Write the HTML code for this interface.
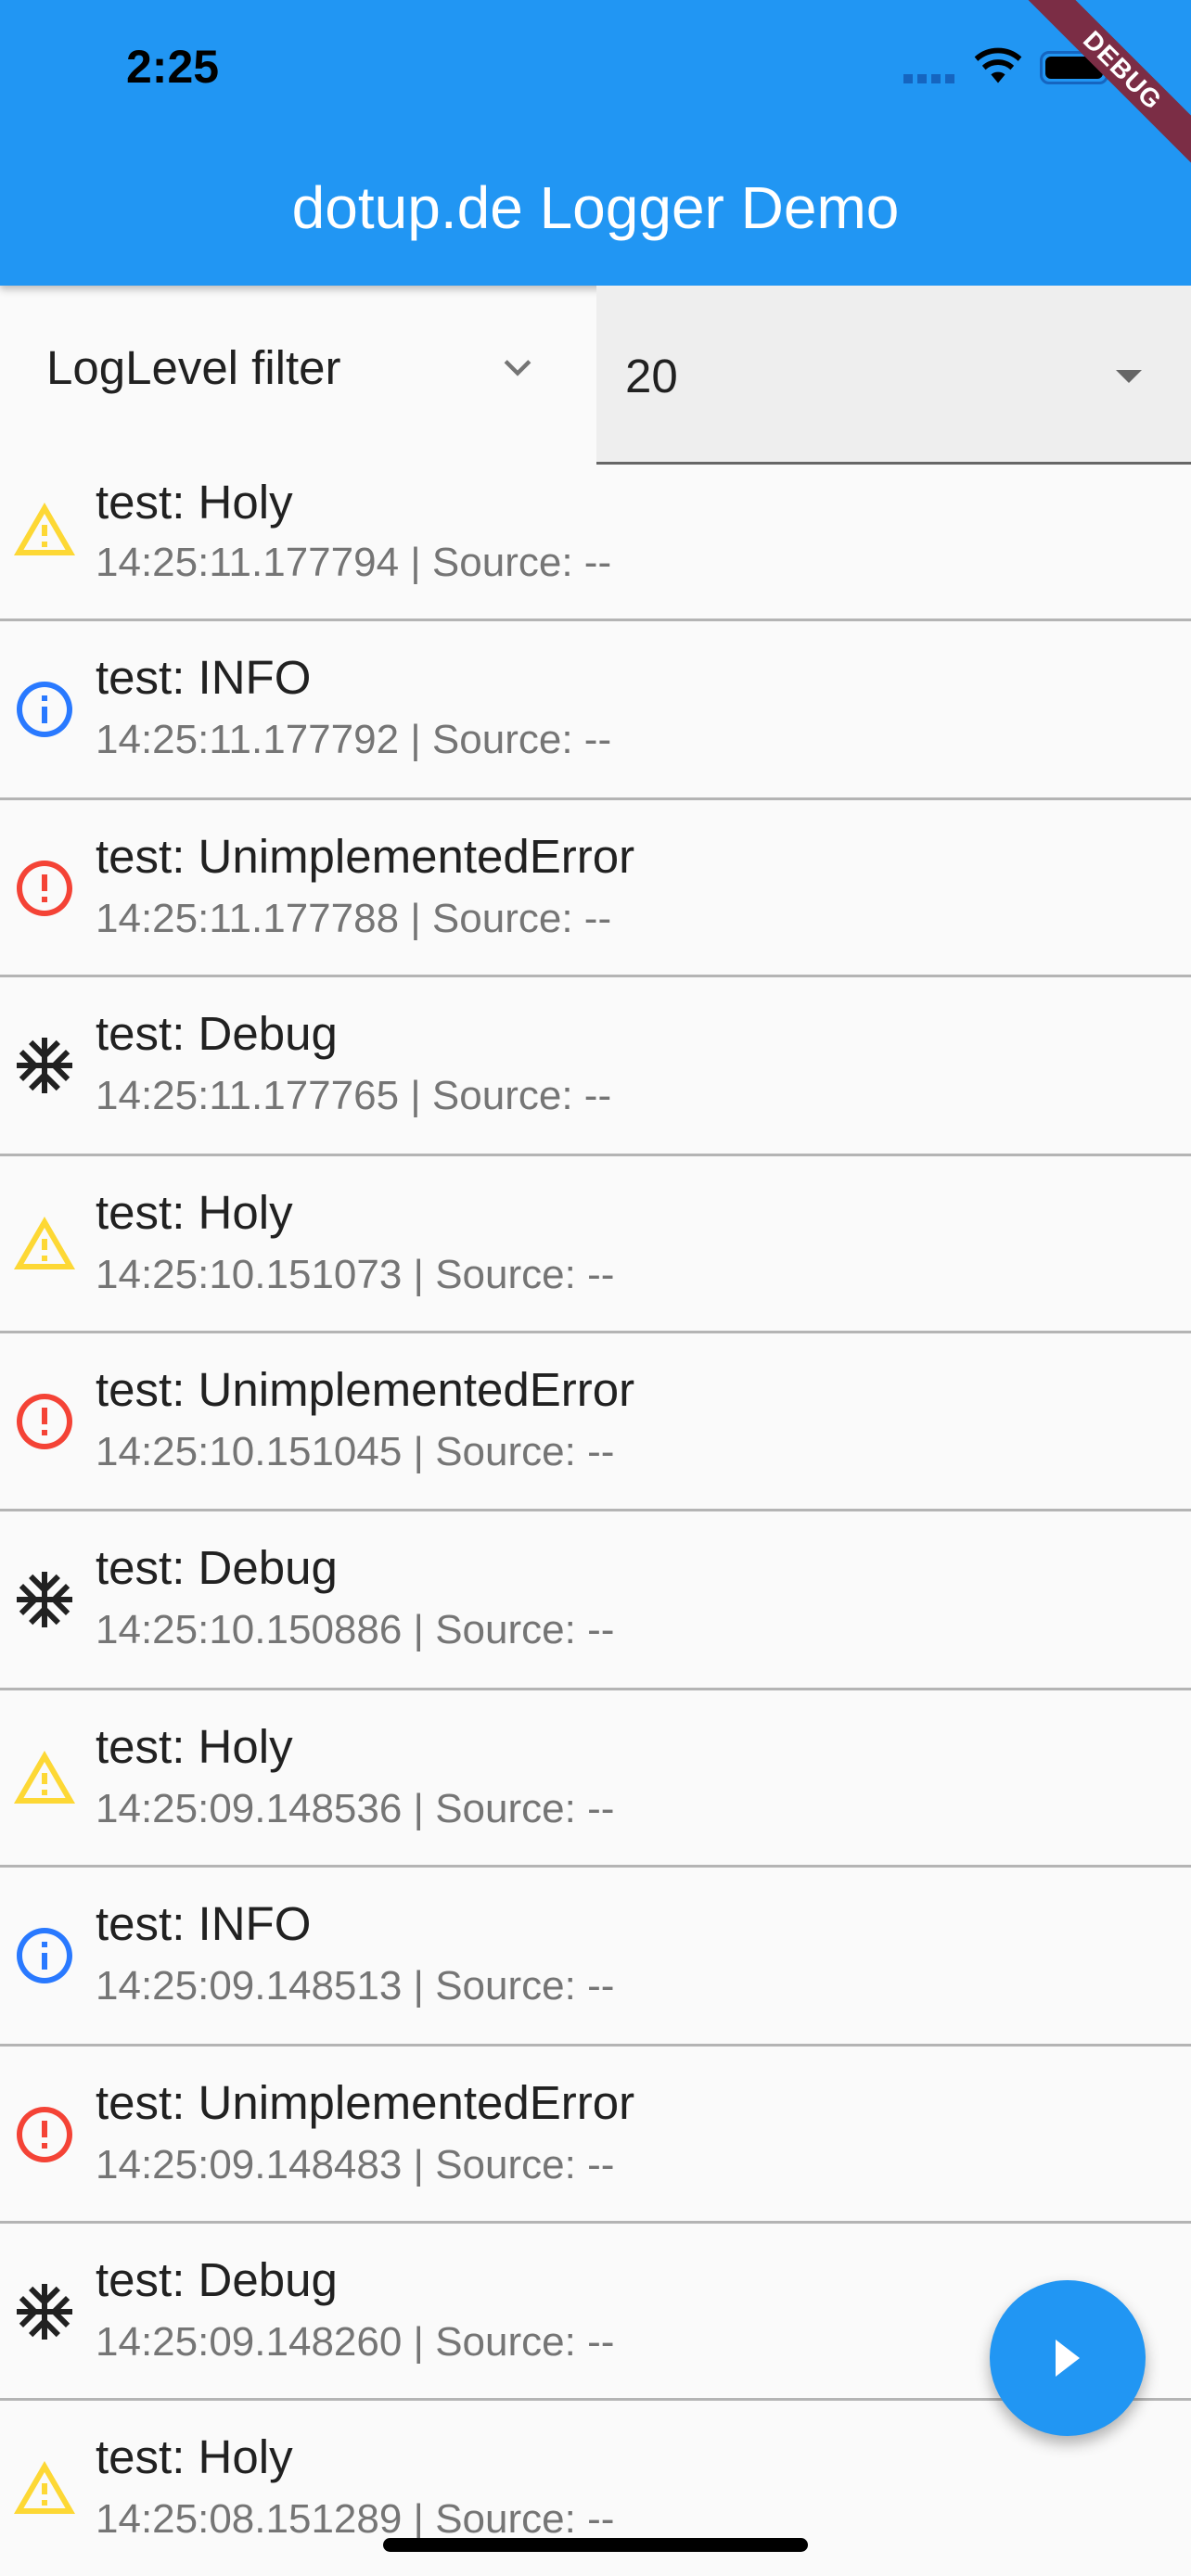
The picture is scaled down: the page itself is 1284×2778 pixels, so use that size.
<!DOCTYPE html>
<html><head><meta charset="utf-8"><style>
*{margin:0;padding:0;box-sizing:border-box}
body{width:1284px;height:2778px;background:#fafafa;position:relative;overflow:hidden;font-family:"Liberation Sans",sans-serif}
.a{position:absolute}
.t{position:absolute;left:103px;height:60px;line-height:60px;font-size:51px;color:#212121;white-space:nowrap}
.s{position:absolute;left:103px;height:60px;line-height:60px;font-size:44px;color:#757575;white-space:nowrap}
.d{position:absolute;left:0;width:1284px;height:3px;background:#b4b4b4}
.i{position:absolute;left:12px;width:72px;height:72px}
</style></head><body>
<div class="a" style="left:0;top:0;width:1284px;height:308px;background:#2196F3;box-shadow:0 4px 8px rgba(0,0,0,.25)"></div>
<div class="a" style="left:136px;top:42px;font-size:50px;font-weight:bold;color:#000;line-height:60px">2:25</div>
<div class="a" style="left:974px;top:80px;width:57px;height:10px;background:repeating-linear-gradient(90deg,#1565c0 0 10px,transparent 10px 15px)"></div>
<svg class="a" style="left:1050px;top:48px" width="52" height="44" viewBox="0 0 24 20"><path d="M12 19l3.5-4.2a5.5 5.5 0 0 0-7 0z M12 10a9 9 0 0 1 6.2 2.4l1.7-2A11.7 11.7 0 0 0 12 7.3 11.7 11.7 0 0 0 4.1 10.4l1.7 2A9 9 0 0 1 12 10z M12 4.2a14.8 14.8 0 0 1 10 3.9L23.7 6A17.4 17.4 0 0 0 12 1.5 17.4 17.4 0 0 0 .3 6L2 8.1A14.8 14.8 0 0 1 12 4.2z" fill="#000"/></svg>
<div class="a" style="left:1121px;top:55px;width:74px;height:36px;border:3px solid #1565c0;border-radius:10px;padding:3px"><div style="width:100%;height:100%;background:#000;border-radius:6px"></div></div>
<div class="a" style="left:1000px;top:58px;width:420px;height:36px;background:#7b2d45;transform:rotate(45deg);color:#fff;font-weight:bold;font-size:28px;text-align:center;line-height:36px;letter-spacing:1px">DEBUG</div>
<div class="a" style="left:0;top:189px;width:1284px;text-align:center;color:#fff;font-size:64px;line-height:70px">dotup.de Logger Demo</div>
<div class="a" style="left:50px;top:367px;font-size:51px;color:#212121;line-height:60px">LogLevel filter</div>
<svg class="a" style="left:536px;top:375px" width="44" height="44" viewBox="0 0 24 24"><path d="M5 8l7 7 7-7" stroke="#757575" stroke-width="2.4" fill="none"/></svg>
<div class="a" style="left:643px;top:308px;width:641px;height:193px;background:#eeeeee;border-bottom:3px solid #666"></div>
<div class="a" style="left:674px;top:376px;font-size:51px;color:#212121;line-height:60px">20</div>
<div class="a" style="left:1203px;top:399px;width:0;height:0;border-left:14px solid transparent;border-right:14px solid transparent;border-top:14px solid #666"></div>

<div class="t" style="top:512px">test: Holy</div><div class="s" style="top:577px">14:25:11.177794 | Source: --</div>
<svg class="i" style="top:536px" viewBox="0 0 24 24"><path fill="#FDD835" d="M12 5.99L19.53 19H4.47L12 5.99M12 2L1 21h22L12 2zm1 14h-2v2h2v-2zm0-6h-2v4h2v-4z"/></svg>
<div class="d" style="top:667px"></div>

<div class="t" style="top:701px">test: INFO</div><div class="s" style="top:768px">14:25:11.177792 | Source: --</div>
<svg class="i" style="top:729px" viewBox="0 0 24 24"><path fill="#2979FF" d="M11 7h2v2h-2zm0 4h2v6h-2zm1-9C6.48 2 2 6.48 2 12s4.48 10 10 10 10-4.48 10-10S17.52 2 12 2zm0 18c-4.41 0-8-3.59-8-8s3.59-8 8-8 8 3.59 8 8-3.59 8-8 8z"/></svg>
<div class="d" style="top:860px"></div>

<div class="t" style="top:894px">test: UnimplementedError</div><div class="s" style="top:961px">14:25:11.177788 | Source: --</div>
<svg class="i" style="top:922px" viewBox="0 0 24 24"><path fill="#F44336" d="M11 15h2v2h-2zm0-8h2v6h-2zm.99-5C6.47 2 2 6.48 2 12s4.47 10 9.99 10C17.52 22 22 17.52 22 12S17.52 2 11.990 2zM12 20c-4.42 0-8-3.58-8-8s3.58-8 8-8 8 3.58 8 8-3.58 8-8 8z"/></svg>
<div class="d" style="top:1051px"></div>

<div class="t" style="top:1085px">test: Debug</div><div class="s" style="top:1152px">14:25:11.177765 | Source: --</div>
<svg class="i" style="top:1113px" viewBox="0 0 24 24"><path fill="#212121" d="M22 11h-4.17l3.24-3.24-1.41-1.42L15 11h-2V9l4.66-4.66-1.42-1.41L13 6.17V2h-2v4.17L7.76 2.93 6.34 4.34 11 9v2H9L4.34 6.34 2.93 7.76 6.17 11H2v2h4.17l-3.24 3.24 1.41 1.42L9 13h2v2l-4.66 4.66 1.42 1.41L11 17.83V22h2v-4.17l3.24 3.24 1.42-1.41L13 15v-2h2l4.66 4.66 1.41-1.42L17.83 13H22z"/></svg>
<div class="d" style="top:1244px"></div>

<div class="t" style="top:1278px">test: Holy</div><div class="s" style="top:1345px">14:25:10.151073 | Source: --</div>
<svg class="i" style="top:1306px" viewBox="0 0 24 24"><path fill="#FDD835" d="M12 5.99L19.53 19H4.47L12 5.99M12 2L1 21h22L12 2zm1 14h-2v2h2v-2zm0-6h-2v4h2v-4z"/></svg>
<div class="d" style="top:1435px"></div>

<div class="t" style="top:1469px">test: UnimplementedError</div><div class="s" style="top:1536px">14:25:10.151045 | Source: --</div>
<svg class="i" style="top:1497px" viewBox="0 0 24 24"><path fill="#F44336" d="M11 15h2v2h-2zm0-8h2v6h-2zm.99-5C6.47 2 2 6.48 2 12s4.47 10 9.99 10C17.52 22 22 17.52 22 12S17.52 2 11.99 2zM12 20c-4.42 0-8-3.58-8-8s3.58-8 8-8 8 3.58 8 8-3.58 8-8 8z"/></svg>
<div class="d" style="top:1627px"></div>

<div class="t" style="top:1661px">test: Debug</div><div class="s" style="top:1728px">14:25:10.150886 | Source: --</div>
<svg class="i" style="top:1689px" viewBox="0 0 24 24"><path fill="#212121" d="M22 11h-4.17l3.24-3.24-1.41-1.42L15 11h-2V9l4.66-4.66-1.42-1.41L13 6.17V2h-2v4.17L7.76 2.93 6.34 4.34 11 9v2H9L4.34 6.34 2.93 7.76 6.17 11H2v2h4.17l-3.24 3.24 1.41 1.42L9 13h2v2l-4.66 4.66 1.42 1.41L11 17.83V22h2v-4.17l3.24 3.24 1.42-1.41L13 15v-2h2l4.66 4.66 1.41-1.42L17.83 13H22z"/></svg>
<div class="d" style="top:1820px"></div>

<div class="t" style="top:1854px">test: Holy</div><div class="s" style="top:1921px">14:25:09.148536 | Source: --</div>
<svg class="i" style="top:1882px" viewBox="0 0 24 24"><path fill="#FDD835" d="M12 5.99L19.53 19H4.47L12 5.99M12 2L1 21h22L12 2zm1 14h-2v2h2v-2zm0-6h-2v4h2v-4z"/></svg>
<div class="d" style="top:2011px"></div>

<div class="t" style="top:2045px">test: INFO</div><div class="s" style="top:2112px">14:25:09.148513 | Source: --</div>
<svg class="i" style="top:2073px" viewBox="0 0 24 24"><path fill="#2979FF" d="M11 7h2v2h-2zm0 4h2v6h-2zm1-9C6.48 2 2 6.48 2 12s4.48 10 10 10 10-4.48 10-10S17.52 2 12 2zm0 18c-4.41 0-8-3.59-8-8s3.59-8 8-8 8 3.59 8 8-3.59 8-8 8z"/></svg>
<div class="d" style="top:2204px"></div>

<div class="t" style="top:2238px">test: UnimplementedError</div><div class="s" style="top:2305px">14:25:09.148483 | Source: --</div>
<svg class="i" style="top:2266px" viewBox="0 0 24 24"><path fill="#F44336" d="M11 15h2v2h-2zm0-8h2v6h-2zm.99-5C6.47 2 2 6.48 2 12s4.47 10 9.99 10C17.52 22 22 17.52 22 12S17.52 2 11.99 2zM12 20c-4.42 0-8-3.58-8-8s3.58-8 8-8 8 3.58 8 8-3.58 8-8 8z"/></svg>
<div class="d" style="top:2395px"></div>

<div class="t" style="top:2429px">test: Debug</div><div class="s" style="top:2496px">14:25:09.148260 | Source: --</div>
<svg class="i" style="top:2457px" viewBox="0 0 24 24"><path fill="#212121" d="M22 11h-4.17l3.24-3.24-1.41-1.42L15 11h-2V9l4.66-4.66-1.42-1.41L13 6.17V2h-2v4.17L7.76 2.93 6.34 4.34 11 9v2H9L4.34 6.34 2.93 7.76 6.17 11H2v2h4.17l-3.24 3.24 1.41 1.42L9 13h2v2l-4.66 4.66 1.42 1.41L11 17.83V22h2v-4.17l3.24 3.24 1.42-1.41L13 15v-2h2l4.66 4.66 1.41-1.42L17.83 13H22z"/></svg>
<div class="d" style="top:2586px"></div>

<div class="t" style="top:2620px">test: Holy</div><div class="s" style="top:2687px">14:25:08.151289 | Source: --</div>
<svg class="i" style="top:2648px" viewBox="0 0 24 24"><path fill="#FDD835" d="M12 5.99L19.53 19H4.47L12 5.99M12 2L1 21h22L12 2zm1 14h-2v2h2v-2zm0-6h-2v4h2v-4z"/></svg>

<div class="a" style="left:1067px;top:2459px;width:168px;height:168px;border-radius:50%;background:#2196F3;box-shadow:0 8px 16px rgba(0,0,0,.3)"></div>
<div class="a" style="left:1138px;top:2523px;width:0;height:0;border-top:20px solid transparent;border-bottom:20px solid transparent;border-left:26px solid #fff"></div>
<div class="a" style="left:413px;top:2737px;width:458px;height:15px;border-radius:8px;background:#000"></div>
</body></html>
